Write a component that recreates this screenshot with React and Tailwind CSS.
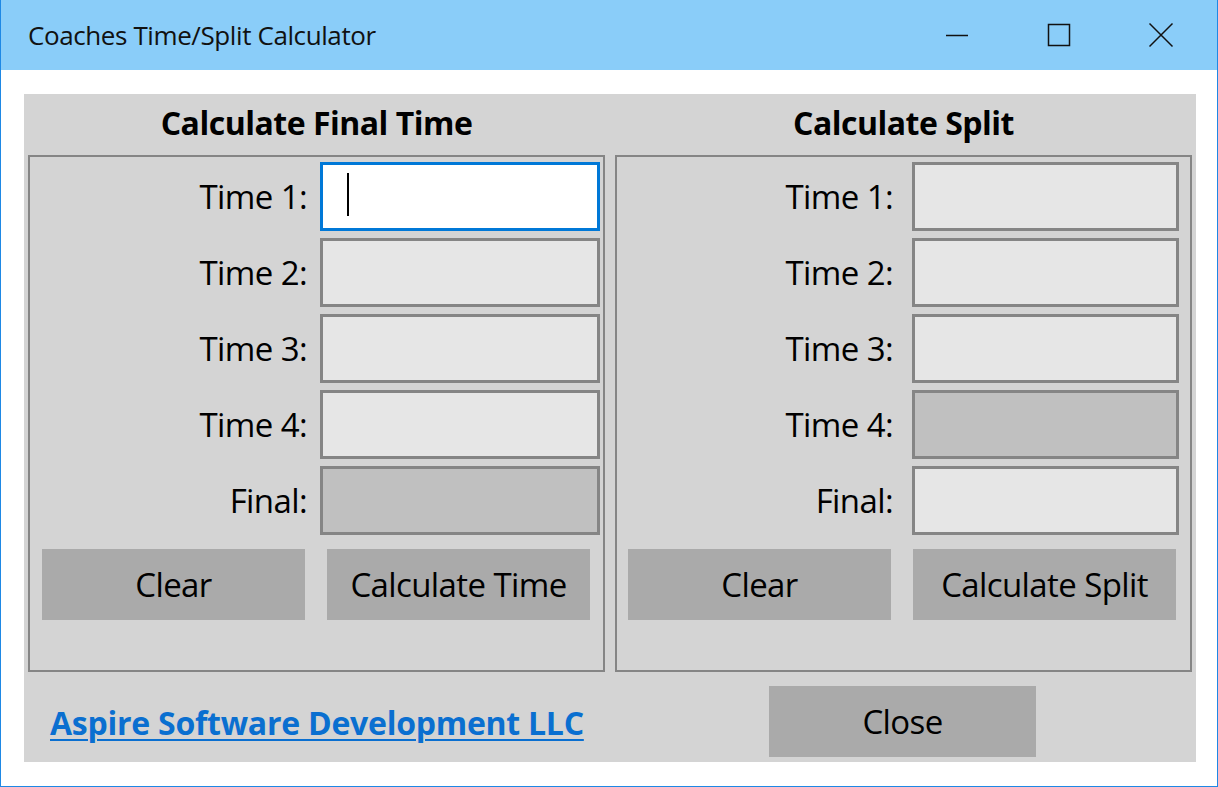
import { useState } from 'react'

const font = { fontFamily: '"Open Sans", "Noto Sans", sans-serif' }

function Field({ label, value, onChange, disabled, focused, labelW, inputW }) {
  let cls = 'h-[69px] border-[3px] border-[#858585] bg-[#e6e6e6]'
  if (disabled) cls = 'h-[69px] border-[3px] border-[#858585] bg-[#c0c0c0]'
  if (focused) cls = 'h-[69px] border-[3px] border-[#0078d7] bg-white'
  return (
    <div className="flex items-center">
      <div className={`${labelW} text-right text-[33px] text-black leading-none tracking-[-0.6px]`}>{label}</div>
      <div className="relative">
        <input
          className={`${cls} ${inputW} outline-none pl-[26px] pr-4 text-[30px] caret-transparent`}
          value={value}
          disabled={disabled}
          onChange={e => onChange(e.target.value)}
        />
        {focused && <span className="absolute left-[27px] top-[11px] w-[2px] h-[43px] bg-black" />}
      </div>
    </div>
  )
}

function Btn({ children, onClick }) {
  return (
    <button onClick={onClick} className="h-[71px] w-[263px] bg-[#aaaaaa] text-[33px] text-black tracking-[-0.6px]">
      {children}
    </button>
  )
}

export default function App() {
  const [left, setLeft] = useState(['', '', '', '', ''])
  const [right, setRight] = useState(['', '', '', '', ''])
  const labels = ['Time 1:', 'Time 2:', 'Time 3:', 'Time 4:', 'Final:']

  return (
    <div style={font} className="w-[1218px] h-[787px] flex flex-col border-x border-b border-[#1e88e5] bg-white overflow-hidden">
      <div className="h-[70px] shrink-0 bg-[#8acdf9] flex items-center pl-[27px]">
        <span className="text-[26px] text-[#111] tracking-[-0.4px]">Coaches Time/Split Calculator</span>
        <div className="ml-auto flex items-center h-full">
          <div className="w-[102px] h-full flex items-center justify-center">
            <svg width="24" height="24" viewBox="0 0 24 24"><path d="M1 12.5h22" stroke="#111" strokeWidth="1.5" /></svg>
          </div>
          <div className="w-[102px] h-full flex items-center justify-center">
            <svg width="24" height="24" viewBox="0 0 24 24"><rect x="1.5" y="1.5" width="21" height="21" fill="none" stroke="#111" strokeWidth="1.5" /></svg>
          </div>
          <div className="w-[102px] h-full flex items-center justify-center mr-[5px]">
            <svg width="26" height="26" viewBox="0 0 26 26"><path d="M1.5 1.5l23 23M24.5 1.5l-23 23" stroke="#111" strokeWidth="1.5" /></svg>
          </div>
        </div>
      </div>

      <div className="flex-1 pt-[24px] pl-[23px] pr-[21px] pb-[24px]">
        <div className="h-full bg-[#d4d4d4] flex flex-col px-[4px]">
          <div className="flex gap-[10px]">
            <div className="w-[577px] flex flex-col">
              <div className="h-[61px] flex items-center justify-center pb-[4px] text-[32px] font-bold tracking-[-0.5px]">Calculate Final Time</div>
              <div className="h-[517px] border-2 border-[#858585] pt-[5px] flex flex-col">
                <div className="flex flex-col gap-[7px]">
                  {labels.map((l, i) => (
                    <Field key={l} label={l} value={left[i]}
                      onChange={v => setLeft(left.map((x, j) => (j === i ? v : x)))}
                      disabled={i === 4} focused={i === 0}
                      labelW="w-[277px] pr-[13px] box-content" inputW="w-[280px]" />
                  ))}
                </div>
                <div className="flex pl-[12px] gap-[22px] mt-[14px]">
                  <Btn onClick={() => setLeft(['', '', '', '', ''])}>Clear</Btn>
                  <Btn>Calculate Time</Btn>
                </div>
              </div>
            </div>
            <div className="w-[577px] flex flex-col">
              <div className="h-[61px] flex items-center justify-center pb-[4px] text-[32px] font-bold tracking-[-0.5px]">Calculate Split</div>
              <div className="h-[517px] border-2 border-[#858585] pt-[5px] flex flex-col">
                <div className="flex flex-col gap-[7px]">
                  {labels.map((l, i) => (
                    <Field key={l} label={l} value={right[i]}
                      onChange={v => setRight(right.map((x, j) => (j === i ? v : x)))}
                      disabled={i === 3}
                      labelW="w-[276px] pr-[19px] box-content" inputW="w-[267px]" />
                  ))}
                </div>
                <div className="flex pl-[11px] gap-[22px] mt-[14px]">
                  <Btn onClick={() => setRight(['', '', '', '', ''])}>Clear</Btn>
                  <Btn>Calculate Split</Btn>
                </div>
              </div>
            </div>
          </div>
          <div className="flex pt-[14px]">
            <div className="w-[577px] h-[71px] pl-[22px] flex items-center pt-[2px]">
              <a href="#" className="text-[32px] font-bold text-[#0a6fd0] underline underline-offset-[4px] decoration-2 tracking-[-0.25px]">Aspire Software Development LLC</a>
            </div>
            <div className="w-[577px] ml-[10px] pl-[154px]">
              <button className="h-[71px] w-[267px] bg-[#aaaaaa] text-[33px] text-black tracking-[-0.6px]">Close</button>
            </div>
          </div>
        </div>
      </div>
    </div>
  )
}
